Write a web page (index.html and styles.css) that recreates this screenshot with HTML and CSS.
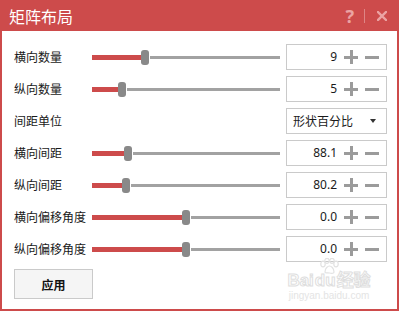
FILE: index.html
```html
<!DOCTYPE html>
<html lang="zh-CN">
<head>
<meta charset="utf-8">
<link rel="stylesheet" href="styles.css">
</head>
<body>
<div class="window">
  <div class="titlebar">
    <span class="title">矩阵布局</span>
    <div class="tools">
      <span class="help">?</span>
      <span class="sep"></span>
      <svg class="close" width="10" height="10" viewBox="0 0 10 10"><path d="M1 1L9 9M9 1L1 9" stroke="currentColor" stroke-width="2.4" stroke-linecap="square"/></svg>
    </div>
  </div>
  <div class="content">
    <div class="row">
      <span class="label">横向数量</span>
      <div class="slider"><span class="fill" style="width:49px"></span><span class="thumb"></span><span class="rest"></span></div>
      <div class="spin"><span class="val">9</span><span class="plus"></span><span class="minus"></span></div>
    </div>
    <div class="row">
      <span class="label">纵向数量</span>
      <div class="slider"><span class="fill" style="width:26px"></span><span class="thumb"></span><span class="rest"></span></div>
      <div class="spin"><span class="val">5</span><span class="plus"></span><span class="minus"></span></div>
    </div>
    <div class="row">
      <span class="label">间距单位</span>
      <div class="slider empty"></div>
      <div class="select"><span class="opt">形状百分比</span><span class="arrow"></span></div>
    </div>
    <div class="row">
      <span class="label">横向间距</span>
      <div class="slider"><span class="fill" style="width:32px"></span><span class="thumb"></span><span class="rest"></span></div>
      <div class="spin"><span class="val">88.1</span><span class="plus"></span><span class="minus"></span></div>
    </div>
    <div class="row">
      <span class="label">纵向间距</span>
      <div class="slider"><span class="fill" style="width:30px"></span><span class="thumb"></span><span class="rest"></span></div>
      <div class="spin"><span class="val">80.2</span><span class="plus"></span><span class="minus"></span></div>
    </div>
    <div class="row">
      <span class="label">横向偏移角度</span>
      <div class="slider"><span class="fill" style="width:90px"></span><span class="thumb"></span><span class="rest"></span></div>
      <div class="spin"><span class="val">0.0</span><span class="plus"></span><span class="minus"></span></div>
    </div>
    <div class="row">
      <span class="label">纵向偏移角度</span>
      <div class="slider"><span class="fill" style="width:90px"></span><span class="thumb"></span><span class="rest"></span></div>
      <div class="spin"><span class="val">0.0</span><span class="plus"></span><span class="minus"></span></div>
    </div>
    <button class="apply">应用</button>
  </div>
  <div class="watermark">
    <svg class="paw" width="22" height="16" viewBox="0 0 22 16"><g fill="none" stroke="#e2e2e2" stroke-width="1.2"><ellipse cx="5" cy="6" rx="2.2" ry="2.8"/><ellipse cx="9" cy="2.8" rx="2.2" ry="2.5"/><ellipse cx="14" cy="2.8" rx="2.2" ry="2.5"/><ellipse cx="18" cy="6" rx="2.2" ry="2.8"/><path d="M7 14c0-4 3-6 4.5-6s4.5 2 4.5 6c0 1.5-2 1.5-4.5 1s-4.5.5-4.5-1z"/></g></svg>
    <span class="wm-big">Bai<span class="du">du</span>经验</span>
    <span class="wm-small">jingyan.baidu.com</span>
  </div>
</div>
</body>
</html>
```

FILE: styles.css
```css
html, body {
  margin: 0;
  padding: 0;
  background: #fff;
}
body {
  font-family: "Noto Sans CJK SC", "Noto Sans", sans-serif;
  font-size: 12px;
  color: #1a1a1a;
}
.window {
  position: relative;
  width: 399px;
  height: 311px;
  box-sizing: border-box;
  border: 2px solid #cd4b4b;
  border-top: none;
  background: #fff;
}
.titlebar {
  height: 31px;
  margin: 0 -2px;
  background: #cd4b4b;
  display: flex;
  align-items: center;
  justify-content: space-between;
  padding: 0 12px 0 9px;
}
.title {
  color: #fff;
  font-size: 16px;
  line-height: 16px;
}
.tools {
  display: flex;
  align-items: center;
  color: #eba3a3;
}
.help {
  font-family: "Noto Sans", sans-serif;
  font-weight: bold;
  font-size: 18px;
  line-height: 18px;
}
.sep {
  width: 1px;
  height: 14px;
  background: #de8585;
  margin: 0 12px 0 10px;
}
.close {
  display: block;
}
.content {
  padding: 13px 0 0 12px;
  display: flex;
  flex-direction: column;
  gap: 6px;
}
.row {
  display: flex;
  align-items: center;
  height: 26px;
}
.label {
  width: 78px;
  flex: none;
  white-space: nowrap;
  line-height: 14px;
}
.slider {
  width: 188px;
  flex: none;
  display: flex;
  align-items: center;
  height: 16px;
}
.fill {
  height: 5px;
  background: #cd4b4b;
  flex: none;
}
.thumb {
  width: 8px;
  height: 15px;
  border-radius: 3px;
  background: #898989;
  flex: none;
}
.rest {
  flex: 1;
  height: 3px;
  background: #a2a2a2;
  margin-left: 1px;
}
.spin, .select {
  margin-left: 6px;
  width: 101px;
  height: 26px;
  box-sizing: border-box;
  border: 1px solid #cacaca;
  display: flex;
  align-items: center;
}
.val {
  flex: 1;
  text-align: right;
  font-family: "Noto Sans", sans-serif;
  font-size: 12px;
  line-height: 14px;
}
.plus, .minus {
  position: relative;
  width: 14px;
  height: 14px;
  flex: none;
}
.plus {
  margin-left: 7px;
}
.minus {
  margin-left: 7px;
  margin-right: 7px;
}
.plus::before, .plus::after, .minus::before {
  content: "";
  position: absolute;
  background: #9b9b9b;
}
.plus::before, .minus::before {
  left: 0;
  right: 0;
  top: 6px;
  height: 3px;
}
.plus::after {
  top: 0;
  bottom: 0;
  left: 6px;
  width: 3px;
}
.opt {
  flex: 1;
  padding-left: 6px;
  line-height: 14px;
}
.arrow {
  width: 0;
  height: 0;
  border-left: 3px solid transparent;
  border-right: 3px solid transparent;
  border-top: 4px solid #333;
  margin-right: 10px;
}
.apply {
  width: 79px;
  height: 30px;
  margin-top: 1px;
  box-sizing: border-box;
  border: 1px solid #cacaca;
  background: #f5f5f5;
  font-family: "Noto Sans CJK SC", sans-serif;
  font-size: 12px;
  font-weight: bold;
  color: #111;
  padding: 0;
}
.watermark {
  position: absolute;
  left: 282px;
  top: 258px;
  width: 90px;
  display: flex;
  flex-direction: column;
  align-items: center;
  pointer-events: none;
}
.paw {
  display: block;
  margin-bottom: -2px;
}
.wm-big {
  font-family: "Liberation Sans", "Noto Sans CJK SC", sans-serif;
  font-size: 17px;
  font-weight: bold;
  line-height: 18px;
  color: #fff;
  -webkit-text-stroke: 1px #dedede;
  white-space: nowrap;
}
.wm-big .du {
  margin: 0 1px;
}
.wm-small {
  font-family: "Liberation Sans", sans-serif;
  font-size: 10px;
  line-height: 12px;
  color: #e4e4e4;
}
```
